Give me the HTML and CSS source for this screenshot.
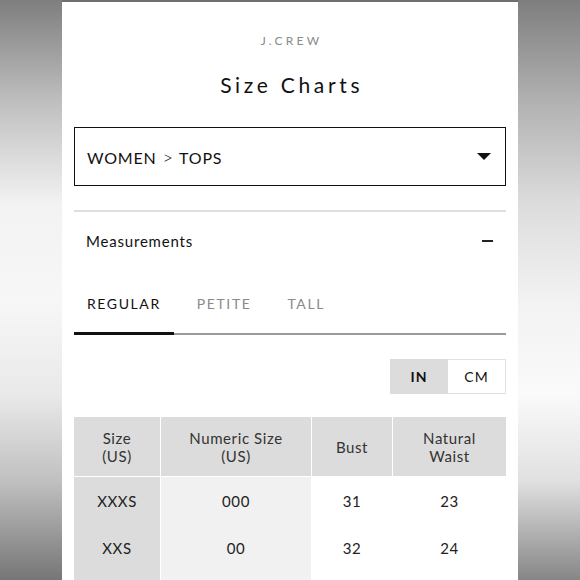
FILE: index.html
```html
<!DOCTYPE html>
<html lang="en">
<head>
<meta charset="utf-8">
<title>Size Charts</title>
<link rel="stylesheet" href="styles.css">
</head>
<body>
<main class="page">
  <div class="brand">J.CREW</div>
  <h1 class="title">Size Charts</h1>
  <div class="select">
    <span class="select-label">WOMEN <span class="chev">&gt;</span> TOPS</span>
    <svg class="caret" width="14" height="7" viewBox="0 0 14 7"><path d="M0 0H14L7 7Z" fill="#111"/></svg>
  </div>
  <div class="rule"></div>
  <div class="acc">
    <span>Measurements</span>
    <span class="minus"></span>
  </div>
  <nav class="tabs">
    <span class="tab active">REGULAR</span>
    <span class="tab">PETITE</span>
    <span class="tab">TALL</span>
  </nav>
  <div class="units">
    <span class="unit on">IN</span>
    <span class="unit off">CM</span>
  </div>
  <table class="chart">
    <colgroup>
      <col class="c1"><col class="c2"><col class="c3"><col class="c4">
    </colgroup>
    <thead>
      <tr><th>Size<br>(US)</th><th>Numeric Size<br>(US)</th><th>Bust</th><th>Natural<br>Waist</th></tr>
    </thead>
    <tbody>
      <tr><td>XXXS</td><td>000</td><td>31</td><td>23</td></tr>
      <tr><td>XXS</td><td>00</td><td>32</td><td>24</td></tr>
      <tr class="more"><td></td><td></td><td></td><td></td></tr>
    </tbody>
  </table>
</main>
</body>
</html>
```
FILE: styles.css
```css
html, body {
  margin: 0;
  height: 100%;
}
body {
  font-family: Lato, "Noto Sans", sans-serif;
  color: #111;
  overflow: hidden;
  background:
    linear-gradient(to bottom, #7e7e7e 0%, #bdbdbd 17%, #f2f2f2 35%, #f7f7f7 52%, #e9e9e9 68%, #c0c0c0 83%, #767676 100%) left top / 50% 100% no-repeat,
    linear-gradient(to bottom, #7e7e7e 0%, #b0b0b0 17%, #dcdcdc 35%, #f2f2f2 52%, #fafafa 68%, #e0e0e0 83%, #868686 100%) right top / 50% 100% no-repeat;
}
.page {
  display: block;
  width: 456px;
  margin: 0 auto;
  min-height: 100%;
  box-sizing: border-box;
  background: #fff;
  border-top: 2px solid #6f6f6f;
  padding: 0 12px;
}
.brand {
  padding-top: 31px;
  text-align: center;
  font-size: 12px;
  line-height: 16px;
  letter-spacing: 3.2px;
  padding-left: 3px;
  color: #8a8a8a;
}
.title {
  margin: 23px 0 0;
  text-align: center;
  font-size: 21px;
  font-weight: 400;
  line-height: 26px;
  letter-spacing: 3.7px;
  padding-left: 3.5px;
  color: #111;
}
.select {
  margin-top: 29px;
  height: 59px;
  box-sizing: border-box;
  border: 1px solid #111;
  display: flex;
  align-items: center;
  justify-content: space-between;
  padding: 0 14px 0 12px;
  font-size: 16px;
  letter-spacing: 0.8px;
}
.chev {
  font-size: 18px;
  font-weight: 300;
  margin: 0 1px;
}
.caret {
  display: block;
}
.rule {
  margin-top: 24px;
  height: 2px;
  background: #dedede;
}
.acc {
  display: flex;
  justify-content: space-between;
  align-items: center;
  height: 58px;
  padding: 0 13px 0 12px;
  font-size: 15px;
  letter-spacing: 0.8px;
  color: #111;
}
.minus {
  width: 11px;
  height: 2px;
  background: #222;
}
.tabs {
  display: flex;
  gap: 36px;
  padding: 24px 0 19px 13px;
  border-bottom: 2px solid #9a9a9a;
  font-size: 14px;
  line-height: 20px;
  letter-spacing: 1.6px;
}
.tab {
  color: #8a8a8a;
}
.tab.active {
  color: #111;
  position: relative;
}
.tab.active::after {
  content: "";
  position: absolute;
  left: -13px;
  width: 100px;
  bottom: -21px;
  height: 3px;
  background: #111;
}
.units {
  display: flex;
  justify-content: flex-end;
  margin-top: 24px;
}
.unit {
  width: 58px;
  height: 35px;
  box-sizing: border-box;
  display: flex;
  align-items: center;
  justify-content: center;
  font-size: 14px;
  letter-spacing: 1px;
  color: #111;
}
.unit.on {
  background: #dcdcdc;
  font-weight: 700;
}
.unit.off {
  background: #fff;
  border: 1px solid #e2e2e2;
  border-left: none;
}
.chart {
  margin-top: 23px;
  width: 432px;
  table-layout: fixed;
  border-collapse: separate;
  border-spacing: 0;
  font-size: 15px;
  letter-spacing: 0.6px;
}
.c1 { width: 86px; }
.c2 { width: 151px; }
.c3 { width: 81px; }
.c4 { width: 114px; }
.chart th, .chart td {
  padding: 0;
  text-align: center;
  font-weight: 400;
  color: #222;
  border-left: 1px solid #fff;
}
.chart th:first-child, .chart td:first-child {
  border-left: none;
}
.chart th {
  height: 59px;
  line-height: 18px;
  background: #dcdcdc;
  border-bottom: 1px solid #fff;
  color: #333;
}
.chart td {
  height: 47px;
  background: #fff;
}
.chart td:nth-child(1) {
  background: #dcdcdc;
}
.chart td:nth-child(2) {
  background: #f1f1f1;
}
```
